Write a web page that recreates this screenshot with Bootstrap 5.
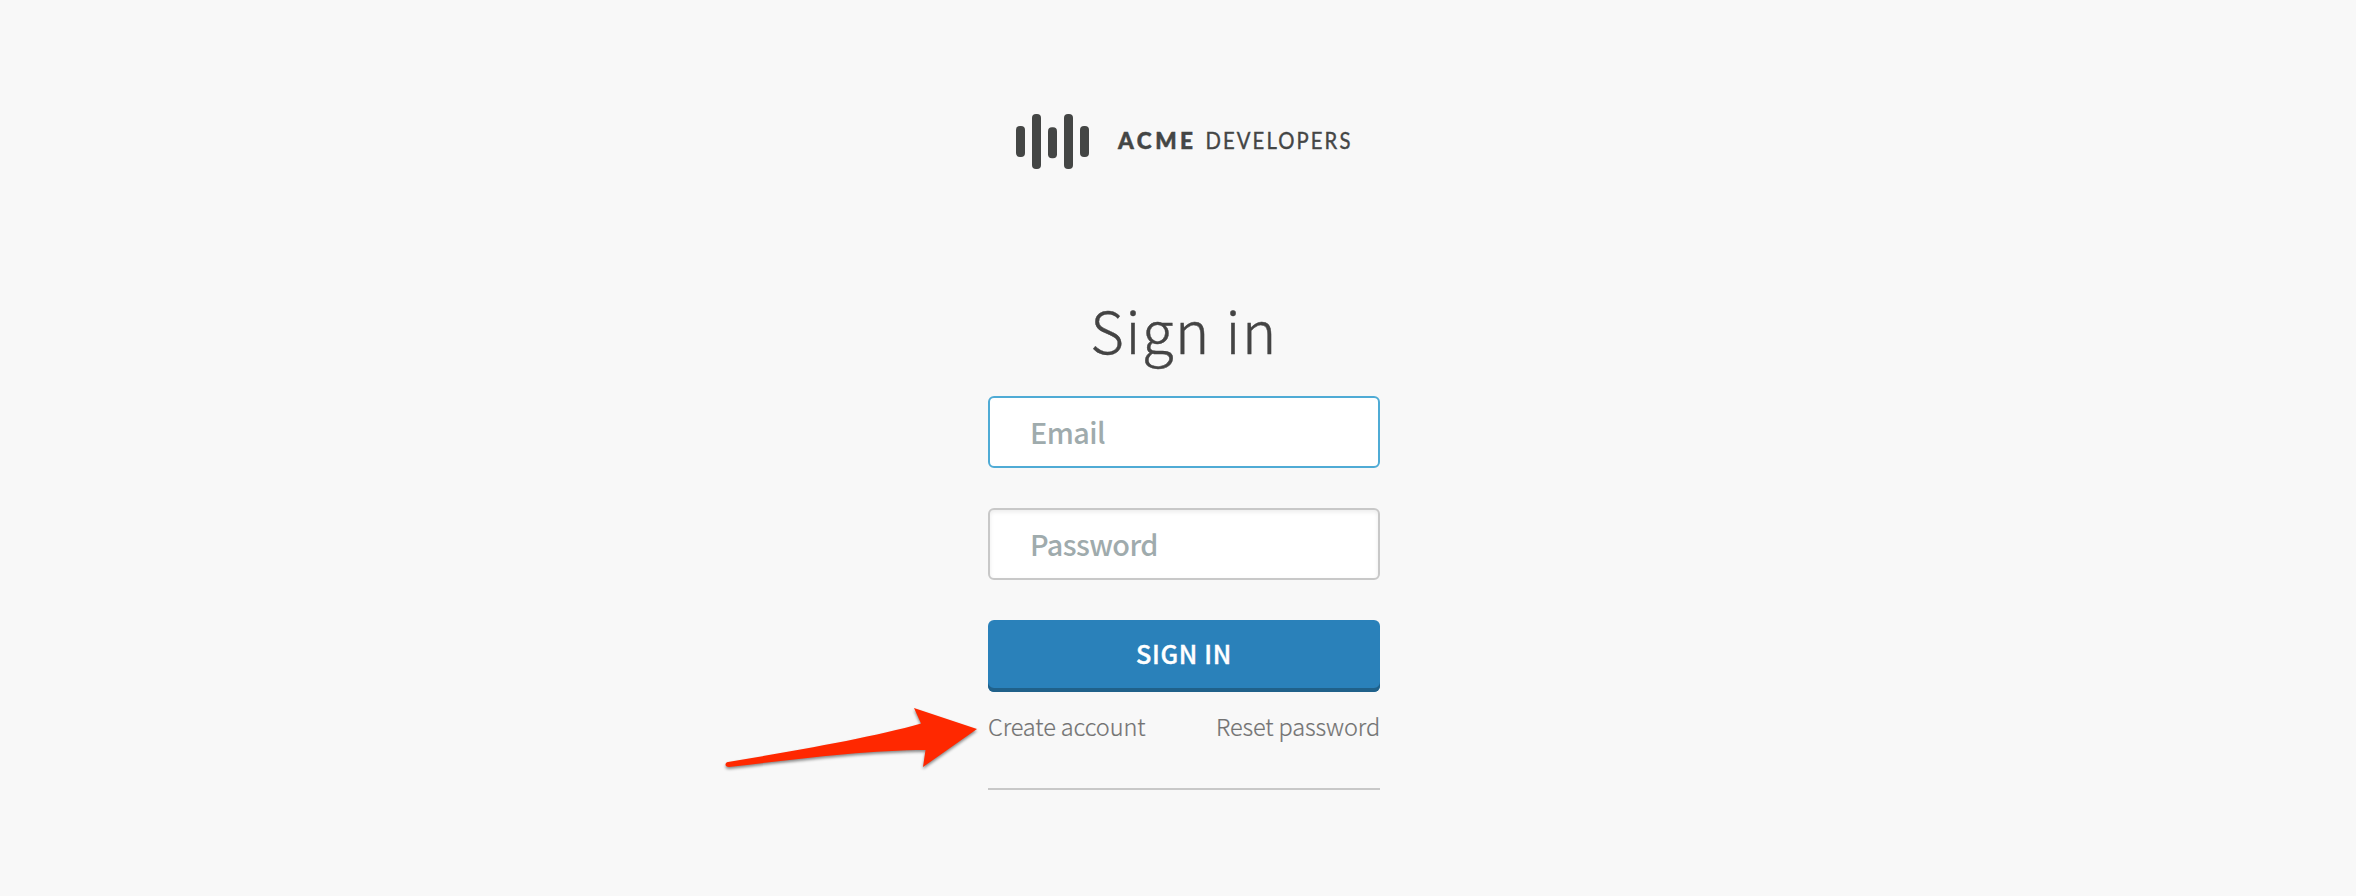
<!DOCTYPE html>
<html lang="en">
<head>
<meta charset="utf-8">
<meta name="viewport" content="width=device-width, initial-scale=1">
<title>Sign in - Acme Developers</title>
<link href="https://cdn.jsdelivr.net/npm/bootstrap@5.3.0/dist/css/bootstrap.min.css" rel="stylesheet">
<style>
body { background: #f8f8f8; font-family: "Noto Sans CJK SC", sans-serif; color: #444; overflow: hidden; }
.page { padding: 114px 0 0 12px; min-height: 896px; }
.panel { width: 392px; }
.brand { height: 56px; margin-left: 28px; width: 340px; }
.brand text { font-family: Lato, sans-serif; font-size: 22.5px; fill: #444645; }
.title { font-size: 58px; font-weight: 300; line-height: 80px; letter-spacing: 1.6px; margin: 119px 0 27px; color: #444; -webkit-text-stroke: .4px #444; }
.field { height: 72px; border: 2px solid #c8c8c8; border-radius: 6px; padding: 0 40px 2px; font-size: 28.8px; font-weight: 500; letter-spacing: -.6px; line-height: 66px; margin-bottom: 40px; background: #fff; box-shadow: inset 0 2px 4px rgba(0,0,0,.08); }
.field::placeholder { color: #9fabad; opacity: 1; }
.field-active, .field:focus { border-color: #4fabd5; box-shadow: none; }
.submit { height: 72px; border: 0; border-radius: 6px; background: #2a81ba; color: #fff; font-size: 25.2px; font-weight: 500; letter-spacing: .7px; padding: 0 0 4px; box-shadow: inset 0 -4px #20618a; -webkit-text-stroke: .4px #fff; }
.links { height: 98px; border-bottom: 2px solid #c8c8c8; padding-top: 16px; }
.links a { font-size: 23.5px; font-weight: 300; letter-spacing: -.1px; line-height: 36px; color: #737373; white-space: nowrap; -webkit-text-stroke: .2px #737373; }
.pointer { left: -266px; top: 4px; pointer-events: none; filter: drop-shadow(0 2px 1.5px rgba(0,0,0,.45)); }
</style>
</head>
<body>
<main class="page d-flex flex-column align-items-center">
  <div class="panel">
    <svg class="brand d-block" viewBox="0 0 340 56" role="img" aria-label="Acme Developers">
      <g fill="#444645">
        <rect x="0" y="12" width="9" height="31" rx="4"/>
        <rect x="16" y="0" width="9" height="55" rx="4"/>
        <rect x="32" y="13.3" width="9" height="31" rx="4"/>
        <rect x="48" y="0" width="9" height="55" rx="4"/>
        <rect x="64" y="12" width="9" height="31" rx="4"/>
      </g>
      <text x="102" y="35.300" font-weight="900" stroke="#444645" stroke-width=".5" textLength="75">ACME</text>
      <text transform="translate(189.500 35.300) scale(.9 1)" stroke="#444645" stroke-width=".4" textLength="161">DEVELOPERS</text>
    </svg>
    <form>
      <h1 class="title text-center">Sign in</h1>
      <input class="form-control field field-active" type="email" placeholder="Email" aria-label="Email">
      <input class="form-control field" type="password" placeholder="Password" aria-label="Password">
      <button class="btn submit w-100" type="button">SIGN IN</button>
      <div class="links position-relative d-flex justify-content-between align-items-start">
        <a class="text-decoration-none" href="#">Create account</a>
        <a class="text-decoration-none" href="#">Reset password</a>
        <svg class="pointer position-absolute" width="260" height="80" viewBox="0 0 260 80" aria-hidden="true">
          <path fill="#ff2800" d="M6 66C75 54.500 152 41 199 27.500L192 12L255 33L201 71L203.500 54C148 54 75 63 7 71C2.500 71 2.500 66.500 6 66Z"/>
        </svg>
      </div>
    </form>
  </div>
</main>
<script src="https://cdn.jsdelivr.net/npm/bootstrap@5.3.0/dist/js/bootstrap.bundle.min.js"></script>
</body>
</html>
